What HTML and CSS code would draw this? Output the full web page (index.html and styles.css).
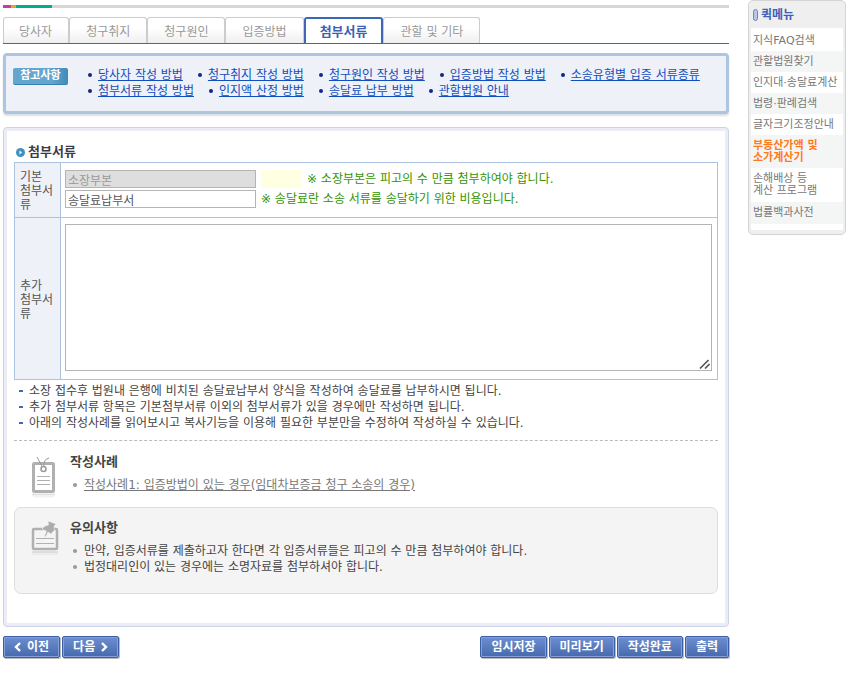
FILE: index.html
```html
<!DOCTYPE html>
<html lang="ko">
<head>
    <meta charset="UTF-8">
    <meta name="viewport" content="width=device-width, initial-scale=1.0">
    <title>첨부서류</title>
    <link rel="stylesheet" href="styles.css">
</head>
<body>
    <div class="page">
        <main class="main">
            <div class="color-bar"><span class="pink"></span><span class="orange"></span><span class="green"></span></div>

            <nav class="tabs">
                <a href="#">당사자</a>
                <a href="#">청구취지</a>
                <a href="#">청구원인</a>
                <a href="#">입증방법</a>
                <a href="#" class="active">첨부서류</a>
                <a href="#">관할 및 기타</a>
            </nav>

            <section class="guide">
                <strong class="guide-badge">참고사항</strong>
                <ul class="guide-list">
                    <li><a href="#">당사자 작성 방법</a></li>
                    <li><a href="#">청구취지 작성 방법</a></li>
                    <li><a href="#">청구원인 작성 방법</a></li>
                    <li><a href="#">입증방법 작성 방법</a></li>
                    <li><a href="#">소송유형별 입증 서류종류</a></li>
                    <li><a href="#">첨부서류 작성 방법</a></li>
                    <li><a href="#">인지액 산정 방법</a></li>
                    <li><a href="#">송달료 납부 방법</a></li>
                    <li><a href="#">관할법원 안내</a></li>
                </ul>
            </section>

            <section class="panel">
                <h2 class="panel-title">
                    <svg width="9" height="9" viewBox="0 0 9 9"><circle cx="4.5" cy="4.5" r="4.5" fill="#3f93c0"/><path d="M3.500 2.500L6 4.500L3.500 6.500Z" fill="#fff"/></svg>
                    첨부서류
                </h2>

                <table class="form-table">
                    <tr>
                        <th scope="row">기본<br>첨부서류</th>
                        <td>
                            <div class="field">
                                <input type="text" value="소장부본" aria-label="소장부본" disabled>
                                <span class="count"></span>
                                <span class="help">※ 소장부본은 피고의 수 만큼 첨부하여야 합니다.</span>
                            </div>
                            <div class="field">
                                <input type="text" value="송달료납부서" aria-label="송달료납부서">
                                <span class="help">※ 송달료란 소송 서류를 송달하기 위한 비용입니다.</span>
                            </div>
                        </td>
                    </tr>
                    <tr>
                        <th scope="row"><label for="extra">추가<br>첨부서류</label></th>
                        <td>
                            <div class="memo">
                                <textarea id="extra"></textarea>
                                <svg class="grip" width="11" height="10" viewBox="0 0 11 10"><path d="M1 9.500L9.500 1M6 9.500L10.500 5" fill="none" stroke="#555" stroke-width="1.600"/></svg>
                            </div>
                        </td>
                    </tr>
                </table>

                <ul class="notes">
                    <li>소장 접수후 법원내 은행에 비치된 송달료납부서 양식을 작성하여 송달료를 납부하시면 됩니다.</li>
                    <li>추가 첨부서류 항목은 기본첨부서류 이외의 첨부서류가 있을 경우에만 작성하면 됩니다.</li>
                    <li>아래의 작성사례를 읽어보시고 복사기능을 이용해 필요한 부분만을 수정하여 작성하실 수 있습니다.</li>
                </ul>

                <div class="info case">
                    <svg width="28" height="44" viewBox="0 0 28 44" fill="none" stroke="#b0b0b0">
                        <rect x="2.500" y="9.500" width="20" height="28" rx="1" stroke-width="3"/>
                        <path d="M12 14L6 3M13 14Q12 5 18 4" stroke="#999"/>
                        <circle cx="12.500" cy="15" r="2.500" fill="#fff" stroke="#999" stroke-width="1.500"/>
                        <path d="M6 22.500H19M6 26.500H19M6 30.500H19"/>
                        <path d="M1 40.500H24" stroke="#e2e2e2" stroke-width="2"/>
                        <path d="M2 42.500H23" stroke="#f2f2f2" stroke-width="2"/>
                    </svg>
                    <div>
                        <h3>작성사례</h3>
                        <ul>
                            <li><a href="#">작성사례1: 입증방법이 있는 경우(임대차보증금 청구 소송의 경우)</a></li>
                        </ul>
                    </div>
                </div>

                <div class="info caution">
                    <svg width="28" height="36" viewBox="0 0 28 36" fill="none" stroke="#b0b0b0">
                        <rect x="2" y="9" width="24" height="20" rx="1" stroke-width="2.500"/>
                        <path d="M5 18.500H23M5 23.500H23"/>
                        <path d="M17 1L25 4L23 6L23.500 10L20 14L17 12L14.500 17L13.500 16L15.500 11L11 9L14 6L17.500 5Z" fill="#acacac" stroke="#f4f4f4" stroke-width=".5"/>
                        <path d="M1 32H27" stroke="#dedede" stroke-width="2"/>
                        <path d="M1 34H27" stroke="#ebebeb" stroke-width="2"/>
                    </svg>
                    <div>
                        <h3>유의사항</h3>
                        <ul>
                            <li>만약, 입증서류를 제출하고자 한다면 각 입증서류들은 피고의 수 만큼 첨부하여야 합니다.</li>
                            <li>법정대리인이 있는 경우에는 소명자료를 첨부하셔야 합니다.</li>
                        </ul>
                    </div>
                </div>
            </section>

            <div class="buttons">
                <button type="button"><svg width="8" height="10" viewBox="0 0 8 10"><path d="M6 1L2 5L6 9" fill="none" stroke="#fff" stroke-width="2.400"/></svg>이전</button>
                <button type="button">다음<svg width="8" height="10" viewBox="0 0 8 10"><path d="M2 1L6 5L2 9" fill="none" stroke="#fff" stroke-width="2.400"/></svg></button>
                <button type="button" class="push">임시저장</button>
                <button type="button">미리보기</button>
                <button type="button">작성완료</button>
                <button type="button">출력</button>
            </div>
        </main>

        <aside class="quick">
            <h2>
                <svg width="5" height="12" viewBox="0 0 5 12"><rect x=".5" y=".5" width="4" height="11" rx="2" fill="#b9c8e8" stroke="#7484b4"/></svg>
                퀵메뉴
            </h2>
            <ul>
                <li><a href="#">지식FAQ검색</a></li>
                <li><a href="#">관할법원찾기</a></li>
                <li><a href="#">인지대·송달료계산</a></li>
                <li><a href="#">법령·판례검색</a></li>
                <li><a href="#">글자크기조정안내</a></li>
                <li><a href="#" class="hot">부동산가액 및<br>소가계산기</a></li>
                <li><a href="#">손해배상 등<br>계산 프로그램</a></li>
                <li><a href="#">법률백과사전</a></li>
            </ul>
        </aside>
    </div>
</body>
</html>
```
FILE: styles.css
```css
* {
    box-sizing: border-box;
}
body {
    margin: 0;
    background: #fff;
    color: #444;
    font-family: "DejaVu Sans", "Noto Sans CJK KR", sans-serif;
    font-size: 12px;
    line-height: 16px;
}
h2, h3, ul {
    margin: 0;
    padding: 0;
}
ul {
    list-style: none;
}
svg {
    display: block;
    flex: none;
}
.page {
    display: flex;
    align-items: flex-start;
    gap: 19px;
    padding: 0 4px 0 3px;
}
.main {
    flex: 1;
    min-width: 0;
    padding-top: 5px;
}
.color-bar {
    display: flex;
    height: 3px;
    background: #d6d6d6;
}
.pink {
    width: 8px;
    background: #cc3e94;
}
.orange {
    width: 5px;
    background: #f0a030;
}
.green {
    width: 36px;
    background: #00ab8e;
}

/* tabs */
.tabs {
    display: flex;
    margin-top: 9px;
    border-bottom: 1px solid #3d68b4;
}
.tabs a {
    height: 26px;
    padding: 0 16px 0 15px;
    border: 1px solid #ccc;
    border-bottom: 0;
    border-radius: 3px 3px 0 0;
    background: linear-gradient(#fff 40%, #efefef);
    color: #999;
    line-height: 28px;
    text-decoration: none;
    white-space: nowrap;
}
.tabs a + a {
    padding: 0 16px;
}
.tabs .active, .tabs a + .active {
    padding: 0 14px;
    border: 2px solid #3d68b4;
    border-bottom: 0;
    background: #fff;
    color: #3d5fb4;
    font-size: 13px;
    font-weight: bold;
    line-height: 26px;
}

/* guide links */
.guide {
    display: flex;
    align-items: flex-start;
    gap: 20px;
    margin-top: 9px;
    padding: 11px 7px 12px;
    border: 3px solid #abc5e2;
    border-radius: 4px;
    background: #eef1f7;
    box-shadow: 0 2px 2px #ddd;
}
.guide-badge {
    flex: none;
    width: 55px;
    height: 17px;
    margin-top: 1px;
    border-bottom: 1px solid #3580ae;
    border-radius: 2px;
    background: linear-gradient(90deg, #65a6d0 70%, #3e8ab8);
    color: #fff;
    font-size: 11px;
    text-align: center;
}
.guide-list {
    display: flex;
    flex-wrap: wrap;
    column-gap: 15px;
}
.guide-list li {
    display: flex;
    align-items: center;
    gap: 6px;
}
.guide-list li::before {
    width: 4px;
    height: 4px;
    border-radius: 2px;
    background: #10268a;
    content: "";
}
.guide-list a {
    color: #114ec0;
}

/* main panel */
.panel {
    margin-top: 13px;
    padding: 16px 10px 32px;
    border: 1px solid #cdd3e4;
    border-radius: 4px;
    box-shadow: inset 0 0 0 3px #ebecf5;
}
.panel-title {
    display: flex;
    align-items: center;
    gap: 3px;
    margin-bottom: 2px;
    padding-left: 2px;
    color: #3c3c46;
    font-size: 13px;
}
.form-table {
    width: 100%;
    border-collapse: collapse;
}
.form-table th, .form-table td {
    border: 1px solid #abc3e0;
}
.form-table th {
    width: 46px;
    padding: 7px 5px 5px;
    background: #eef1f7;
    color: #555;
    font-weight: normal;
    line-height: 14px;
    text-align: left;
    word-break: break-all;
}
.form-table td {
    padding: 6px 5px 8px 4px;
}
.field {
    display: flex;
    align-items: center;
    gap: 5px;
}
.field + .field {
    margin-top: 2px;
}
.field input {
    width: 191px;
    height: 18px;
    padding: 0 2px;
    border: 1px solid #b4b4b4;
    background: #fff;
    color: #555;
    font: inherit;
}
.field input:disabled {
    background: #dedede;
    color: #999;
}
.count {
    width: 41px;
    height: 18px;
    background: #ffffe1;
}
.help {
    color: #319400;
}
.memo {
    position: relative;
}
.memo textarea {
    display: block;
    width: 100%;
    height: 147px;
    border: 1px solid #b4b4b4;
    font: inherit;
    resize: none;
}
.grip {
    position: absolute;
    right: 2px;
    bottom: 2px;
}
.notes {
    padding: 3px 0 9px;
    border-bottom: 1px dashed #bbb;
}
.notes li {
    display: flex;
    align-items: center;
    gap: 6px;
    padding-left: 5px;
}
.notes li::before {
    width: 4px;
    height: 2px;
    background: #3f69b8;
    content: "";
}

/* example and caution blocks */
.info {
    display: flex;
    gap: 11px;
}
.info h3 {
    margin-bottom: 7px;
    font-size: 13px;
}
.info li {
    display: flex;
    align-items: center;
    gap: 7px;
    padding-left: 3px;
}
.info li::before {
    width: 4px;
    height: 4px;
    border-radius: 2px;
    background: #999;
    content: "";
}
.info a {
    color: #777;
}
.case {
    padding: 13px 16px 9px 17px;
}
.caution {
    padding: 12px 16px 18px;
    border: 1px solid #ddd;
    border-radius: 7px;
    background: #f4f4f4;
}

/* buttons */
.buttons {
    display: flex;
    gap: 2px;
    padding: 9px 0 24px;
}
.buttons button {
    display: flex;
    align-items: center;
    gap: 5px;
    height: 22px;
    padding: 0 10px;
    border: 1px solid #3c5ea6;
    border-radius: 2px;
    background: linear-gradient(#6d8fd0, #4669ae);
    box-shadow: inset 0 0 0 1px #83a0d8, 1px 1px 0 #bbb;
    color: #fff;
    font: bold 12px/18px "DejaVu Sans", "Noto Sans CJK KR", sans-serif;
    white-space: nowrap;
    cursor: pointer;
}
.buttons .push {
    margin-left: auto;
}

/* quick menu */
.quick {
    flex: none;
    width: 98px;
    padding: 0 2px 4px;
    border: 1px solid #d4d4d4;
    border-radius: 5px;
    background: #efefef;
}
.quick h2 {
    display: flex;
    align-items: center;
    gap: 3px;
    height: 27px;
    padding-left: 2px;
    color: #405fb8;
    font-size: 12px;
}
.quick ul {
    padding: 2px 0 6px;
    background: #fff;
}
.quick li {
    padding: 5px 2px 4px;
    font-size: 11px;
    line-height: 12px;
    white-space: nowrap;
}
.quick li:nth-child(even) {
    background: #f4f6f6;
}
.quick li:nth-child(n + 7) {
    padding-bottom: 5px;
}
.quick a {
    color: #777;
    text-decoration: none;
}
.quick .hot {
    color: #ff7a1c;
    font-weight: bold;
}
```
